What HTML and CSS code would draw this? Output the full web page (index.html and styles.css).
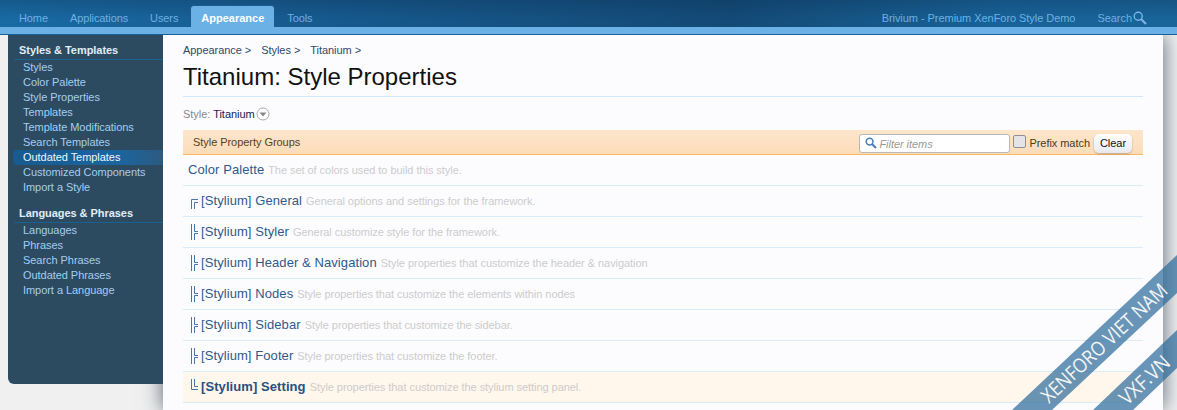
FILE: index.html
```html
<!DOCTYPE html>
<html lang="en">
<head>
    <meta charset="UTF-8">
    <title>Titanium: Style Properties</title>
    <link rel="stylesheet" href="styles.css">
</head>
<body>

    <header class="topbar">
        <nav class="tabs">
            <a href="#">Home</a>
            <a href="#">Applications</a>
            <a href="#">Users</a>
            <a href="#" class="active">Appearance</a>
            <a href="#">Tools</a>
        </nav>
        <div class="top-right">
            <a href="#">Brivium - Premium XenForo Style Demo</a>
            <a href="#" class="search">Search
                <svg width="14" height="14" viewBox="0 0 14 14"><circle cx="5.2" cy="5.2" r="4" fill="none" stroke="#7cb4e4" stroke-width="1.4"/><path d="M8.2 8.2L13 13" stroke="#7cb4e4" stroke-width="2.2"/></svg>
            </a>
        </div>
    </header>
    <div class="strip"></div>

    <div class="page">
        <aside class="sidebar">
            <h4>Styles &amp; Templates</h4>
            <ul>
                <li>Styles</li>
                <li>Color Palette</li>
                <li>Style Properties</li>
                <li>Templates</li>
                <li>Template Modifications</li>
                <li>Search Templates</li>
                <li class="current">Outdated Templates</li>
                <li>Customized Components</li>
                <li>Import a Style</li>
            </ul>
            <h4>Languages &amp; Phrases</h4>
            <ul>
                <li>Languages</li>
                <li>Phrases</li>
                <li>Search Phrases</li>
                <li>Outdated Phrases</li>
                <li>Import a Language</li>
            </ul>
        </aside>

        <main class="content">
            <div class="crumbs">
                <span>Appearance &gt;</span>
                <span>Styles &gt;</span>
                <span>Titanium &gt;</span>
            </div>
            <h1>Titanium: Style Properties</h1>
            <div class="chooser">
                <span class="label">Style:</span> <span class="value">Titanium</span>
                <svg width="14" height="14" viewBox="0 0 14 14"><circle cx="7" cy="7" r="6" fill="#fff" stroke="#aaa"/><path d="M3.5 5.5h7L7 9.5z" fill="#888"/></svg>
            </div>

            <div class="group-head">
                <span class="group-title">Style Property Groups</span>
                <div class="filter">
                    <div class="filter-box">
                        <svg width="12" height="12" viewBox="0 0 12 12"><circle cx="4.6" cy="4.6" r="3.4" fill="none" stroke="#4a7ab8" stroke-width="1.5"/><path d="M7.2 7.2L11 11" stroke="#4a7ab8" stroke-width="2"/></svg>
                        <span>Filter items</span>
                    </div>
                    <span class="check"></span>
                    <span class="prefix">Prefix match</span>
                    <span class="clear">Clear</span>
                </div>
            </div>

            <ul class="groups">
                <li class="top"><b>Color Palette</b> <small>The set of colors used to build this style.</small></li>
                <li>
                    <svg class="tree" width="9" height="16" viewBox="0 0 9 16"><path d="M1.5 16V6.5H8M4.5 16V9.5H8" fill="none" stroke="#4a75a8"/></svg>
                    <b>[Stylium] General</b> <small>General options and settings for the framework.</small>
                </li>
                <li>
                    <svg class="tree" width="9" height="16" viewBox="0 0 9 16"><path d="M1.5 0V16M4.5 0V7.5H8M8 9.5H4.5V16" fill="none" stroke="#4a75a8"/></svg>
                    <b>[Stylium] Styler</b> <small>General customize style for the framework.</small>
                </li>
                <li>
                    <svg class="tree" width="9" height="16" viewBox="0 0 9 16"><path d="M1.5 0V16M4.5 0V7.5H8M8 9.5H4.5V16" fill="none" stroke="#4a75a8"/></svg>
                    <b>[Stylium] Header &amp; Navigation</b> <small>Style properties that customize the header &amp; navigation</small>
                </li>
                <li>
                    <svg class="tree" width="9" height="16" viewBox="0 0 9 16"><path d="M1.5 0V16M4.5 0V7.5H8M8 9.5H4.5V16" fill="none" stroke="#4a75a8"/></svg>
                    <b>[Stylium] Nodes</b> <small>Style properties that customize the elements within nodes</small>
                </li>
                <li>
                    <svg class="tree" width="9" height="16" viewBox="0 0 9 16"><path d="M1.5 0V16M4.5 0V7.5H8M8 9.5H4.5V16" fill="none" stroke="#4a75a8"/></svg>
                    <b>[Stylium] Sidebar</b> <small>Style properties that customize the sidebar.</small>
                </li>
                <li>
                    <svg class="tree" width="9" height="16" viewBox="0 0 9 16"><path d="M1.5 0V16M4.5 0V7.5H8M8 9.5H4.5V16" fill="none" stroke="#4a75a8"/></svg>
                    <b>[Stylium] Footer</b> <small>Style properties that customize the footer.</small>
                </li>
                <li class="selected">
                    <svg class="tree" width="9" height="16" viewBox="0 0 9 16"><path d="M1.5 0V10.5H8M4.5 0V7.5H8" fill="none" stroke="#4a75a8"/></svg>
                    <b>[Stylium] Setting</b> <small>Style properties that customize the stylium setting panel.</small>
                </li>
            </ul>
        </main>
    </div>

    <!-- watermark sits over the page corner -->
    <svg class="watermark" width="165" height="155" viewBox="1012 255 165 155">
        <polygon points="1012,410 1177,255 1177,293 1052,410" fill="#2a6a98" fill-opacity=".7"/>
        <polygon points="1093,410 1177,330 1177,368 1133,410" fill="#2a6a98" fill-opacity=".7"/>
        <text transform="translate(1049,404) rotate(-43) scale(.88,1)">XENFORO VIET NAM</text>
        <text transform="translate(1127,406) rotate(-43) scale(.93,1)">VXF.VN</text>
    </svg>

</body>
</html>
```

FILE: styles.css
```css
html, body {
    height: 100%;
}

body {
    margin: 0;
    background-color: #f0f0f0;
    font-family: "Liberation Sans", Arial, sans-serif;
    font-size: 11px;
    letter-spacing: -0.05px;
    overflow: hidden;
    position: relative;
}

ul {
    list-style: none;
    margin: 0;
    padding: 0;
}

/* Top navigation */
.topbar {
    height: 27px;
    display: flex;
    justify-content: space-between;
    position: relative;
    z-index: 2;
    background:
        linear-gradient(to bottom, rgba(10, 40, 70, 0.25), rgba(10, 40, 70, 0) 70%),
        linear-gradient(to right, #196aa3 0%, #16588c 30%, #134a76 62%, #186298 85%, #196499 100%);
}

.tabs {
    display: flex;
    align-items: flex-end;
    padding-left: 8px;
    letter-spacing: -0.1px;
}

.tabs a,
.top-right a {
    color: #6cb0e6;
    text-decoration: none;
}

.tabs a {
    padding: 0 11px;
    line-height: 26px;
    height: 22px;
}

.tabs a.active {
    background-color: #6cb1e6;
    color: #fff;
    font-weight: bold;
    letter-spacing: 0;
    border-radius: 4px 4px 0 0;
    border: 1px solid #1a5a90;
    border-bottom: 0;
    line-height: 25px;
    height: 21px;
    margin: 0 1px 0 1px;
    padding: 0 10px;
}

.top-right {
    display: flex;
    align-items: center;
    padding: 9px 30px 0 0;
}

.search {
    display: flex;
    align-items: center;
    gap: 1px;
    margin-left: 22px;
}

.strip {
    height: 7px;
    position: relative;
    z-index: 2;
    background-color: #6cb1e6;
    border-bottom: 1px solid #1a5f95;
}

.page {
    display: flex;
    align-items: flex-start;
    padding-left: 8px;
}

/* Left menu */
.sidebar {
    width: 155px;
    height: 349px;
    box-sizing: border-box;
    padding-top: 9px;
    position: relative;
    z-index: 1;
    background-color: #2c4a60;
    border-radius: 0 0 0 6px;
    color: #a6cdf0;
}

.sidebar h4 {
    margin: 0 0 0 6px;
    padding: 0 0 2px 5px;
    font-size: 11px;
    line-height: 13px;
    color: #e0edf8;
    border-bottom: 1px solid #1c6090;
}

.sidebar ul {
    margin-bottom: 12px;
}

.sidebar li {
    height: 15px;
    line-height: 15px;
    padding-left: 10px;
    margin-left: 5px;
}

.sidebar li.current {
    background: linear-gradient(to right, #175a8e, #1b659f 70%, #2c5a80);
    color: #eef6fc;
    border-radius: 3px 0 0 3px;
}

/* Main panel */
.content {
    width: 1000px;
    height: 375px;
    box-sizing: border-box;
    padding: 9px 20px 0;
    background-color: #fcfcff;
    box-shadow: 0 0 20px rgba(20, 40, 60, 0.7);
}

.crumbs {
    display: flex;
    gap: 10px;
    color: #2c4a6a;
    line-height: 13px;
}

h1 {
    margin: 5px 0 0;
    padding-bottom: 4px;
    font-size: 24px;
    font-weight: normal;
    letter-spacing: 0;
    line-height: 30px;
    color: #111;
    border-bottom: 1px solid #d2e8fa;
}

.chooser {
    display: flex;
    align-items: center;
    gap: 3px;
    height: 14px;
    margin: 10px 0 9px;
}

.chooser .label {
    color: #888;
}

.chooser .value {
    color: #1a1a50;
}

.chooser svg {
    margin-left: -2px;
}

.group-head {
    height: 24px;
    display: flex;
    justify-content: space-between;
    align-items: center;
    background: linear-gradient(to bottom, #fde6cc, #fbdcb8);
    border-bottom: 1px solid #f8b860;
}

.group-title {
    padding-left: 10px;
    color: #5a4020;
}

.filter {
    display: flex;
    align-items: center;
    padding: 2px 11px 0 0;
}

.filter-box {
    width: 144px;
    height: 17px;
    display: flex;
    align-items: center;
    gap: 2px;
    padding-left: 5px;
    margin-right: 3px;
    background-color: #fff;
    border: 1px solid #b8b8b8;
    border-radius: 3px;
    color: #999;
    font-style: italic;
}

.filter-box span {
    margin-top: 2px;
}

.check {
    width: 11px;
    height: 11px;
    margin: -4px 3px 0 0;
    background-color: #e4e4e8;
    border: 1px solid #8f8f9a;
    border-radius: 2px;
}

.prefix {
    color: #4a3a20;
    margin-right: 4px;
}

.clear {
    padding: 0 6px;
    line-height: 19px;
    height: 19px;
    background: linear-gradient(to bottom, #fff, #e8e8f0);
    border-radius: 5px;
    color: #111;
    box-shadow: 0 1px 2px rgba(0, 0, 0, 0.25);
}

.groups li {
    height: 30px;
    line-height: 30px;
    display: flex;
    align-items: center;
    gap: 4px;
    padding-left: 7px;
    border-bottom: 1px solid #d8ecfa;
}

.groups li.top {
    padding-left: 5px;
}

.groups b {
    font-size: 13px;
    font-weight: normal;
    letter-spacing: 0.08px;
    color: #2f5a8a;
    white-space: nowrap;
}

.groups small {
    font-size: 11px;
    color: #ccc;
    white-space: nowrap;
}

.tree {
    flex: none;
    margin-right: -2px;
}

.groups li.selected {
    background-color: #fff6ec;
}

.groups li.selected b {
    font-weight: bold;
    color: #2a4f80;
}

.groups li.selected .tree {
    margin-top: -1px;
}

/* Watermark ribbons */
.watermark {
    position: absolute;
    right: 0;
    bottom: 0;
    z-index: 3;
}

.watermark text {
    font-family: "Open Sans", sans-serif;
    font-size: 20px;
    fill: #f4f4f4;
}
```
